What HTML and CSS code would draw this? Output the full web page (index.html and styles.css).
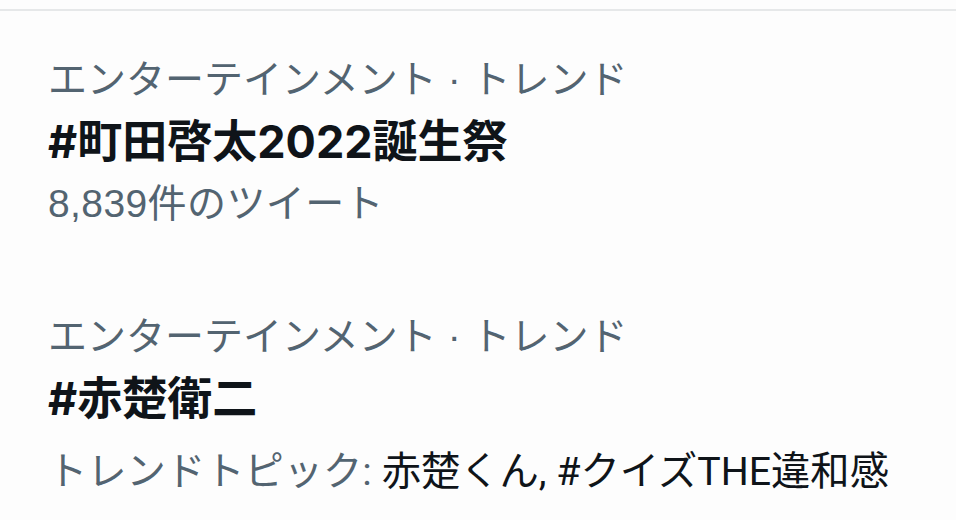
FILE: index.html
```html
<!DOCTYPE html>
<html lang="ja">
<head>
<meta charset="utf-8">
<link rel="stylesheet" href="styles.css">
</head>
<body>
<div class="page">
  <div class="divider"></div>
  <div class="trend">
    <div class="meta">エンターテインメント · トレンド</div>
    <div class="title">#町田啓太<span class="num">2022</span>誕生祭</div>
    <div class="meta count">8,839件のツイート</div>
  </div>
  <div class="trend second">
    <div class="meta">エンターテインメント · トレンド</div>
    <div class="title">#赤楚衛二</div>
    <div class="topics"><span class="label">トレンドトピック:</span> <span class="items">赤楚くん, #クイズTHE違和感</span></div>
  </div>
</div>
</body>
</html>
```

FILE: styles.css
```css
html, body {
  margin: 0;
  padding: 0;
  background: #fdfdfd;
}
.page {
  width: 956px;
  height: 520px;
  overflow: hidden;
  padding-top: 9px;
  box-sizing: border-box;
}
.divider {
  height: 2px;
  background: #e6e8e9;
}
.trend {
  padding: 38px 0 0 48px;
  display: flex;
  flex-direction: column;
}
.second {
  padding-top: 71px;
}
.meta, .title, .topics {
  font-size: 39px;
  line-height: 62px;
  white-space: nowrap;
}
.meta {
  font-family: "Liberation Sans", "Noto Sans CJK JP", sans-serif;
  color: #536471;
}
.count {
  letter-spacing: 0.4px;
}
.title {
  font-family: "Inter", "Noto Sans CJK JP", sans-serif;
  font-size: 45px;
  font-weight: 700;
  color: #0f1419;
}
.num {
  letter-spacing: 0;
}
.topics {
  margin-top: 11px;
  font-size: 39.3px;
  font-family: "Roboto", "Noto Sans CJK JP", sans-serif;
}
.label {
  color: #536471;
}
.items {
  color: #0f1419;
}
```
